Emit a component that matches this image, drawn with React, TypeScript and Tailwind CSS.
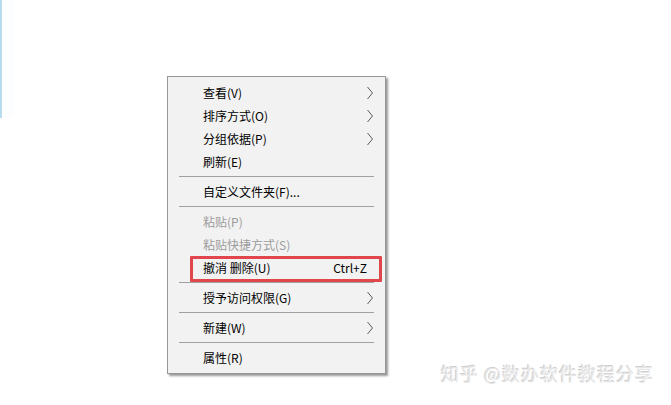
import React from 'react';

type Item =
  | { kind: 'sep' }
  | { kind: 'item'; label: string; sub?: boolean; disabled?: boolean; shortcut?: string; marked?: boolean };

const MENU: Item[] = [
  { kind: 'item', label: '查看(V)', sub: true },
  { kind: 'item', label: '排序方式(O)', sub: true },
  { kind: 'item', label: '分组依据(P)', sub: true },
  { kind: 'item', label: '刷新(E)' },
  { kind: 'sep' },
  { kind: 'item', label: '自定义文件夹(F)...' },
  { kind: 'sep' },
  { kind: 'item', label: '粘贴(P)', disabled: true },
  { kind: 'item', label: '粘贴快捷方式(S)', disabled: true },
  { kind: 'item', label: '撤消 删除(U)', shortcut: 'Ctrl+Z', marked: true },
  { kind: 'sep' },
  { kind: 'item', label: '授予访问权限(G)', sub: true },
  { kind: 'sep' },
  { kind: 'item', label: '新建(W)', sub: true },
  { kind: 'sep' },
  { kind: 'item', label: '属性(R)' },
];

function Chevron() {
  return (
    <svg width="8" height="14" viewBox="0 0 8 14" className="shrink-0">
      <path d="M1.5 1 L6.5 7 L1.5 13" fill="none" stroke="#4a4a4a" strokeWidth="0.9" />
    </svg>
  );
}

export default function App() {
  return (
    <div
      className="relative w-[671px] h-[405px] bg-white overflow-hidden"
      style={{ fontFamily: '"Microsoft YaHei", "Noto Sans CJK SC", "Noto Sans", sans-serif' }}
    >
      {/* edge of a selected window on the left */}
      <div className="absolute left-0 top-0 w-[13px] h-[118px] bg-[#fbfdfe]">
        <div className="w-[2px] h-full bg-[#b9dcec]" />
      </div>

      <div className="pt-[76px] pl-[167px]">
        <div className="w-[219px] border border-[#979797] bg-[#f2f2f2] pt-[4px] pb-[4px] shadow-[2px_2px_2px_rgba(0,0,0,0.4)]">
          {MENU.map((it, i) =>
            it.kind === 'sep' ? (
              <div key={i} className="h-[7px] flex items-center pl-[11px] pr-[11px]">
                <div className="h-px w-full bg-[#a0a0a0]" />
              </div>
            ) : (
              <div
                key={i}
                className={`relative h-[23px] flex items-center pl-[35px] pr-[11px] text-[12px] ${
                  it.disabled ? 'text-[#9c9c9c]' : 'text-black'
                }`}
              >
                <span className="flex-1 leading-none">{it.label}</span>
                {it.shortcut && <span className="leading-none mr-[7px]">{it.shortcut}</span>}
                {it.sub && <Chevron />}
                {it.marked && (
                  <div className="absolute left-[22px] right-[3px] top-0 bottom-[-3px] border-[3px] border-[#e0464c] rounded-[1px]" />
                )}
              </div>
            )
          )}
        </div>
      </div>

      {/* watermark */}
      <div
        className="absolute left-[441px] top-[364px] text-[18px] leading-none text-[#e6e6e6] tracking-[1px]"
        style={{ textShadow: '1px 1px 0 #ffffff, -1px -1px 0 #cfcfcf' }}
      >
        知乎 @数办软件教程分享
      </div>
    </div>
  );
}
